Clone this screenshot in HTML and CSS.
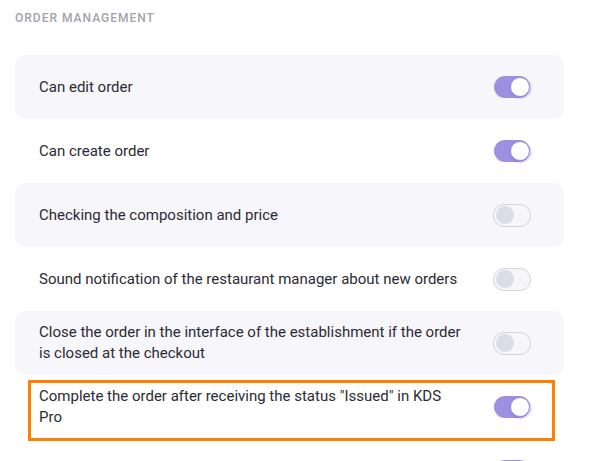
FILE: index.html
```html
<!DOCTYPE html>
<html lang="en">
<head>
<meta charset="utf-8">
<title>Order management</title>
<link rel="stylesheet" href="styles.css">
</head>
<body>
<section class="settings">
  <h2 class="section-title">ORDER MANAGEMENT</h2>
  <div class="rows">
    <div class="row row-shaded">
      <span class="label">Can edit order</span>
      <span class="toggle on"><span class="knob"></span></span>
    </div>
    <div class="row">
      <span class="label">Can create order</span>
      <span class="toggle on"><span class="knob"></span></span>
    </div>
    <div class="row row-shaded">
      <span class="label">Checking the composition and price</span>
      <span class="toggle off"><span class="knob"></span></span>
    </div>
    <div class="row">
      <span class="label">Sound notification of the restaurant manager about new orders</span>
      <span class="toggle off"><span class="knob"></span></span>
    </div>
    <div class="row row-shaded">
      <span class="label">Close the order in the interface of the establishment if the order is closed at the checkout</span>
      <span class="toggle off"><span class="knob"></span></span>
    </div>
    <div class="row row-highlight">
      <span class="label">Complete the order after receiving the status "Issued" in KDS Pro</span>
      <span class="toggle on"><span class="knob"></span></span>
    </div>
    <div class="row">
      <span class="label"></span>
      <span class="toggle on"><span class="knob"></span></span>
    </div>
  </div>
</section>
</body>
</html>
```
FILE: styles.css
```css
html, body {
  margin: 0;
  padding: 0;
  background: #ffffff;
  overflow: hidden;
}
body {
  font-family: Roboto, "Liberation Sans", Arial, sans-serif;
  color: #2b2b33;
}
.settings {
  width: 549px;
  height: 451px;
  overflow: hidden;
  padding: 10px 0 0 15px;
}
.section-title {
  margin: 0;
  font-size: 12px;
  line-height: 16px;
  font-weight: 500;
  letter-spacing: 1px;
  color: #a3a3ab;
}
.rows {
  margin-top: 29px;
  display: flex;
  flex-direction: column;
}
.row {
  position: relative;
  height: 64px;
  flex: none;
  box-sizing: border-box;
  padding: 0 34px 0 24px;
  display: flex;
  align-items: center;
  gap: 27px;
  border-radius: 10px;
}
.row-shaded {
  background: #f7f6fb;
}
.row-highlight::after {
  content: "";
  position: absolute;
  top: 5px;
  left: 13px;
  right: 9px;
  bottom: -2px;
  border: 3px solid #ff8000;
  pointer-events: none;
}
.label {
  flex: 1;
  font-size: 15px;
  line-height: 21px;
}
.toggle {
  flex: none;
  position: relative;
  width: 36px;
  height: 22px;
  box-sizing: border-box;
  border-radius: 11px;
  display: flex;
  align-items: center;
}
.toggle.on {
  background: #9d90e1;
  justify-content: flex-end;
}
.toggle.on .knob {
  width: 20px;
  height: 20px;
  box-sizing: border-box;
  border-radius: 50%;
  background: #ffffff;
  border: 1.5px solid #9d90e1;
  box-shadow: 1px 1px 3px rgba(80, 70, 140, 0.35);
}
.toggle.off {
  width: 38px;
  height: 23px;
  margin-right: -1px;
  background: #f6f6fa;
  border: 1px solid #d3d3da;
  padding-left: 2px;
}
.toggle.off .knob {
  width: 18px;
  height: 18px;
  border-radius: 50%;
  background: #dcdce9;
}
```
